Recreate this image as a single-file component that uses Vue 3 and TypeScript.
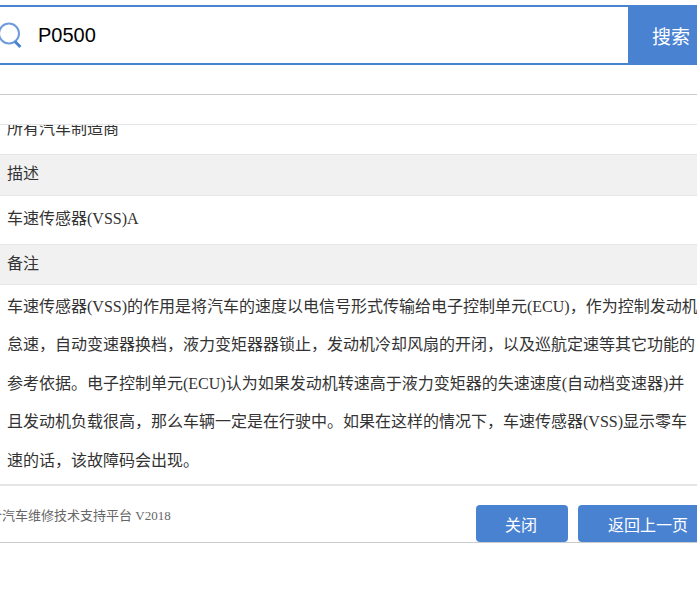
<template>
  <div class="page">
    <div class="search-bar">
      <div class="search-box">
        <svg class="search-icon" width="28" height="28" viewBox="0 0 28 28" fill="none">
          <circle cx="12" cy="11.5" r="10" stroke="#6f9bdd" stroke-width="2" />
          <path d="M18 19.5 L23.4 25" stroke="#4a82d2" stroke-width="3" />
        </svg>
        <span class="search-value">P0500</span>
      </div>
      <button class="search-btn">搜索</button>
    </div>

    <div class="spacer"></div>

    <div class="detail">
      <div class="detail-scroll">
        <div class="row first">所有汽车制造商</div>
      </div>
      <div class="row-head">描述</div>
      <div class="row value">车速传感器(VSS)A</div>
      <div class="row-head second">备注</div>
      <div class="remark">
        <div v-for="line in remarkLines" :key="line" class="remark-line">{{ line }}</div>
      </div>
    </div>

    <div class="footer">
      <div class="copyright">合汽车维修技术支持平台 V2018</div>
      <div class="actions">
        <button class="btn close">关闭</button>
        <button class="btn back">返回上一页</button>
      </div>
    </div>
  </div>
</template>

<script setup lang="ts">
const remarkLines: string[] = [
  '车速传感器(VSS)的作用是将汽车的速度以电信号形式传输给电子控制单元(ECU)，作为控制发动机',
  '怠速，自动变速器换档，液力变矩器器锁止，发动机冷却风扇的开闭，以及巡航定速等其它功能的',
  '参考依据。电子控制单元(ECU)认为如果发动机转速高于液力变矩器的失速速度(自动档变速器)并',
  '且发动机负载很高，那么车辆一定是在行驶中。如果在这样的情况下，车速传感器(VSS)显示零车',
  '速的话，该故障码会出现。',
]
</script>

<style>
html,
body {
  margin: 0;
  background: #fff;
  overflow: hidden;
}
</style>

<style scoped>
.page {
  width: 697px;
  height: 601px;
  overflow: hidden;
  padding-top: 5px;
  box-sizing: border-box;
  background: #fff;
  font-family: "Liberation Serif", "Noto Sans CJK SC", serif;
  font-size: 16px;
  color: #333;
}

.search-bar {
  display: flex;
  height: 60px;
}

.search-box {
  flex: 1;
  display: flex;
  align-items: center;
  border-top: 2px solid #4a82d2;
  border-bottom: 2px solid #4a82d2;
}

.search-icon {
  flex-shrink: 0;
  margin-left: -3px;
  margin-top: 1px;
}

.search-value {
  margin-left: 13px;
  font-family: "Liberation Sans", sans-serif;
  font-size: 20px;
  color: #000;
}

.search-btn {
  width: 69px;
  padding: 0 0 0 24px;
  border: none;
  background: #4a82d2;
  color: #fff;
  font-family: "Noto Sans CJK SC", sans-serif;
  font-size: 19px;
  text-align: left;
  white-space: nowrap;
}

.spacer {
  height: 29px;
  border-bottom: 1px solid #ccc;
}

.detail-scroll {
  margin-top: 29px;
  height: 29px;
  overflow: hidden;
  border-top: 1px solid #e5e5e5;
}

.row {
  padding-left: 7px;
  line-height: 40px;
}

.row.first {
  margin-top: -16px;
}

.row-head {
  height: 40px;
  padding-left: 7px;
  line-height: 37px;
  background: #f1f1f1;
  border-top: 1px solid #e5e5e5;
  border-bottom: 1px solid #e5e5e5;
}

.row-head.second {
  height: 39px;
}

.row.value {
  height: 48px;
  line-height: 45px;
}

.remark {
  padding: 3px 0 4px 7px;
  border-bottom: 2px solid #e5e5e5;
  white-space: nowrap;
}

.remark-line {
  line-height: 38.4px;
}

.footer {
  display: flex;
  justify-content: space-between;
  height: 57px;
  border-bottom: 1px solid #ccc;
  box-sizing: border-box;
}

.copyright {
  margin-left: -11px;
  padding-top: 20px;
  font-size: 13px;
  line-height: 20px;
  color: #666;
  white-space: nowrap;
}

.actions {
  display: flex;
  gap: 10px;
  margin-top: 19px;
  margin-right: -19px;
  height: 37px;
}

.btn {
  height: 37px;
  padding: 0;
  border: none;
  border-radius: 4px;
  background: #4a82d2;
  color: #fff;
  font-family: "Noto Sans CJK SC", sans-serif;
  font-size: 16px;
}

.btn.close {
  width: 92px;
  padding-right: 2px;
}

.btn.back {
  width: 138px;
  padding-left: 2px;
}
</style>
